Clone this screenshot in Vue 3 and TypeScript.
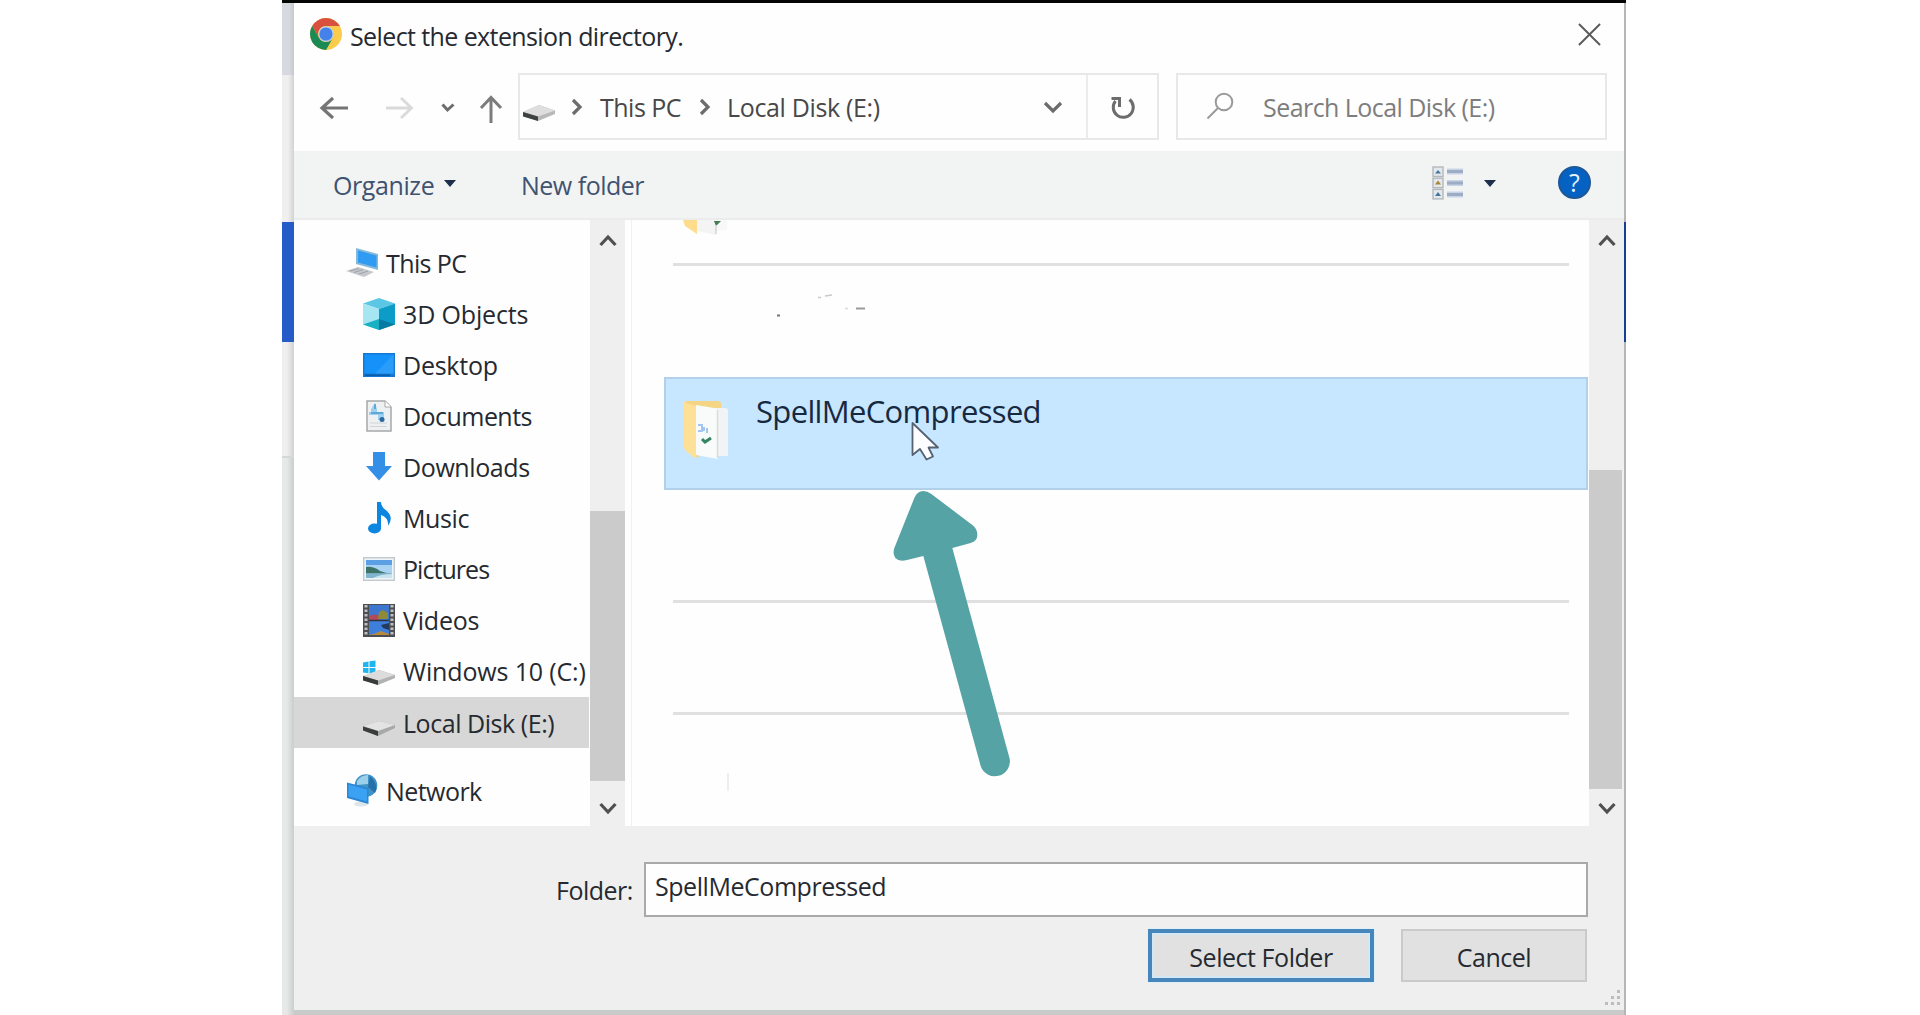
<script setup lang="ts">
type IconName =
  | 'pc' | 'cube' | 'desktop' | 'document' | 'download'
  | 'music' | 'picture' | 'video' | 'windows' | 'disk' | 'network'

interface TreeItem {
  label: string
  icon: IconName
  root?: boolean
  selected?: boolean
  spacing: number
}

const tree: TreeItem[] = [
  { label: 'This PC', icon: 'pc', root: true, spacing: -0.6 },
  { label: '3D Objects', icon: 'cube', spacing: -0.15 },
  { label: 'Desktop', icon: 'desktop', spacing: -0.25 },
  { label: 'Documents', icon: 'document', spacing: -0.55 },
  { label: 'Downloads', icon: 'download', spacing: -0.4 },
  { label: 'Music', icon: 'music', spacing: -0.4 },
  { label: 'Pictures', icon: 'picture', spacing: -0.95 },
  { label: 'Videos', icon: 'video', spacing: -0.2 },
  { label: 'Windows 10 (C:)', icon: 'windows', spacing: -0.15 },
  { label: 'Local Disk (E:)', icon: 'disk', selected: true, spacing: -0.45 },
  { label: 'Network', icon: 'network', root: true, spacing: -0.55 },
]
</script>

<template>
  <div class="page">
    <div class="frame">
      <div class="strip">
        <i class="s1"></i><i class="s2"></i><i class="s3"></i><i class="s4"></i><i class="s5"></i>
      </div>

      <section class="dialog">
        <header class="title">
          <svg class="chrome" viewBox="2 2 44 44">
            <circle cx="24" cy="24" r="22" fill="#fbcb4b" />
            <path d="M4.95 13A22 22 0 0 1 43.05 13H24A11 11 0 0 0 14.47 29.5Z" fill="#d9503f" />
            <path d="M4.95 13L14.47 29.5A11 11 0 0 0 33.53 29.5L24 46A22 22 0 0 1 4.95 13Z" fill="#1b8a54" />
            <circle cx="24" cy="24" r="10.5" fill="#b9cdea" />
            <circle cx="24" cy="24" r="9" fill="#4482ea" />
          </svg>
          <span class="title-text">Select the extension directory.</span>
          <svg class="close" viewBox="0 0 24 24"><path d="M1 1L23 23M23 1L1 23" /></svg>
        </header>

        <div class="nav">
          <svg class="arrows" viewBox="0 0 190 40">
            <path d="M40 20H14M25 10L14 20L25 30" stroke="#757575" stroke-width="3.2" />
            <path d="M78 20H103M93 10L103.500 20L93 30" stroke="#dadada" stroke-width="2.800" />
            <path d="M134.500 16.500L139.500 22L145.500 16.500" stroke="#6c6c6c" stroke-width="3" />
            <path d="M183 35V10M173 20L183 9.500L193 20" stroke="#7c7c7c" stroke-width="3" />
          </svg>
          <div class="address">
            <svg class="drive" viewBox="0 0 32 18">
              <path d="M0 8L16 1L32 6.500V10L15 17L0 12Z" fill="#b9b9b9" />
              <path d="M0 8L16 1L32 6.500L15 12.500Z" fill="#dedede" />
              <path d="M0 8L15 12.500V17L0 12.500Z" fill="#3c4340" />
            </svg>
            <svg class="crumb c1" viewBox="0 0 12 18"><path d="M2 2L9 9L2 16" /></svg>
            <span class="crumb-text pc">This PC</span>
            <svg class="crumb c2" viewBox="0 0 12 18"><path d="M2 2L9 9L2 16" /></svg>
            <span class="crumb-text disk">Local Disk (E:)</span>
            <svg class="drop" viewBox="0 0 20 13"><path d="M2 2L10 10L18 2" /></svg>
            <div class="refresh">
              <svg viewBox="0 0 26 26">
                <path d="M19.500 4.500A10 10 0 1 1 5.500 6" />
                <path d="M1.500 3.500H9.500V12" />
              </svg>
            </div>
          </div>
          <div class="search">
            <svg viewBox="0 0 28 28"><circle cx="18" cy="10" r="8.300" /><path d="M12 16L1.500 26.500" /></svg>
            <span>Search Local Disk (E:)</span>
          </div>
        </div>

        <div class="toolbar">
          <span class="organize">Organize</span>
          <i class="tri t1"></i>
          <span class="newfolder">New folder</span>
          <svg class="view" viewBox="0 0 32 34">
            <g fill="#e3e8ed" stroke="#b3b8bc" stroke-width="1.400">
              <rect x="1" y="1" width="10" height="9.500" />
              <rect x="1" y="12.200" width="10" height="9.500" />
              <rect x="1" y="23.400" width="10" height="9.500" />
            </g>
            <path d="M3 7.500L6 4L9 7.500Z" fill="#44749c" />
            <path d="M3 18.500L6 14.500L9 18.500Z" fill="#a88734" />
            <path d="M3 30L6 26L9 30Z" fill="#44749c" />
            <path d="M15 5.500H31M15 17H31M15 28.500H31" stroke="#c8d4e6" stroke-width="6" />
            <path d="M15 5.500H31M15 17H31M15 28.500H31" stroke="#9cacc5" stroke-width="3" />
          </svg>
          <i class="tri t2"></i>
          <span class="help">?</span>
        </div>

        <div class="body">
          <nav class="tree">
            <div
              v-for="item in tree"
              :key="item.label"
              class="node"
              :class="{ root: item.root, selected: item.selected, network: item.icon === 'network' }"
            >
              <svg class="icon" viewBox="0 0 32 32">
                <g v-if="item.icon === 'pc'">
                  <path d="M10 1L32 7V23L10 17Z" fill="#86b9d9" />
                  <path d="M12 3.500L30.500 8.500V20.500L12 15.500Z" fill="#2f9bf2" />
                  <path d="M0 24L12 20L28 25L18 30Z" fill="#c4c8cc" />
                  <path d="M4 24L13 21.500M8 25.500L17 22.500M13 27L22 24" stroke="#9da3a8" stroke-width="1" />
                </g>
                <g v-else-if="item.icon === 'cube'">
                  <path d="M16 0L32 5.500L16 11L0 5.500Z" fill="#5cc7e4" />
                  <path d="M0 5.500L16 11V32L0 26.500Z" fill="#a6e6f2" />
                  <path d="M32 5.500L16 11V32L32 26.500Z" fill="#0c9cc8" />
                  <path d="M0 26.500L16 21V32Z" fill="#19b0c4" />
                  <path d="M16 32L32 26.500L16 21Z" fill="#087ba3" />
                </g>
                <g v-else-if="item.icon === 'desktop'">
                  <rect x="0" y="4" width="32" height="24" fill="#1379d4" />
                  <rect x="1.500" y="5.500" width="29" height="19" fill="#1492fa" />
                  <path d="M30.500 5.500V24.500H12Z" fill="#2a9dfb" />
                  <path d="M2 26.200H27" stroke="#0a5ca8" stroke-width="1.500" />
                </g>
                <g v-else-if="item.icon === 'document'">
                  <path d="M4 1H22L28 7V31H4Z" fill="#eef0f1" stroke="#a6a8aa" stroke-width="1.500" />
                  <path d="M22 1V7H28" fill="#fff" stroke="#a6a8aa" stroke-width="1" />
                  <path d="M8 9L12 3L14 9V12H21V20H15V15H6V12H8Z" fill="#9fd0f1" />
                  <path d="M12 4V9M8 13H20" stroke="#4a9ad0" fill="none" stroke-width="1.500" />
                  <circle cx="19" cy="19.500" r="2.500" fill="#2c69a0" />
                  <path d="M7 23H24M7 26.500H24" stroke="#d0d4d7" stroke-width="1.200" />
                </g>
                <g v-else-if="item.icon === 'download'">
                  <path d="M10 1H22V15H29L16 29.500L3 15H10Z" fill="#3490e6" />
                </g>
                <g v-else-if="item.icon === 'music'">
                  <ellipse cx="11.500" cy="26.500" rx="6.500" ry="5" fill="#0d86df" />
                  <path d="M14 0H18Q18 5 24 9Q31 16 25 24Q26 16 18 13V27H14Z" fill="#0d86df" />
                </g>
                <g v-else-if="item.icon === 'picture'">
                  <rect x="0.700" y="4.700" width="30.600" height="22.600" fill="#eef3f6" stroke="#c2cad0" stroke-width="1.400" />
                  <rect x="3" y="7" width="26" height="18" fill="#a8d3f4" />
                  <rect x="3" y="7" width="26" height="5" fill="#5b9fe4" />
                  <path d="M3 14Q10 13 17 18Q22 20 29 20.500H3Z" fill="#3c7268" />
                  <path d="M3 20.500H29V25H3Z" fill="#7fb5cf" />
                  <path d="M10 25Q18 21 29 21V25Z" fill="#c9e4ef" />
                </g>
                <g v-else-if="item.icon === 'video'">
                  <rect x="0" y="0" width="32" height="33" fill="#4c4e52" />
                  <rect x="6" y="1" width="20" height="15" fill="#3d76cf" />
                  <rect x="6" y="17" width="20" height="14" fill="#3f7fdc" />
                  <path d="M6 12Q12 9 17 12V16H6Z" fill="#b34a5a" />
                  <path d="M16 8L20 6L25 9V15H15Z" fill="#8f8a35" />
                  <path d="M18 21L26 19V26L20 24Z" fill="#243a5c" />
                  <path d="M6 31L12 29.500L18 27L26 30V31Z" fill="#b98a3a" />
                  <path d="M6 16.500H26" stroke="#2d3342" stroke-width="1.500" />
                  <path d="M3 1V32M29 1V32" stroke="#bfc0c2" stroke-width="3" stroke-dasharray="2.500 2" />
                </g>
                <g v-else-if="item.icon === 'windows'">
                  <path d="M0 7.500L5.500 6.500V12H0ZM6.500 6.300L12.500 5.500V12H6.500ZM0 13H5.500V18.200L0 17.500ZM6.500 13H12.500V19.200L6.500 18.400Z" fill="#1fb6f0" />
                  <path d="M0 21L16 15L32 20V23L15 30L0 25Z" fill="#b2b2b2" />
                  <path d="M0 21L16 15L32 20L15 25.500Z" fill="#dcdcdc" />
                  <path d="M0 21L15 25.500V30L0 25.500Z" fill="#383b3b" />
                </g>
                <g v-else-if="item.icon === 'disk'">
                  <path d="M0 19L16 14L32 18V21L15 29L0 23Z" fill="#a8a8a8" />
                  <path d="M0 19L16 14L32 18L15 24Z" fill="#e3e3e3" />
                  <path d="M0 19.500L15 24V29L0 23.500Z" fill="#3a3d3c" />
                </g>
                <g v-else>
                  <ellipse cx="15" cy="29" rx="7" ry="2.500" fill="#dde5e9" />
                  <circle cx="20" cy="10.500" r="11.300" fill="#3f93c6" />
                  <path d="M11 6Q15 0 22 0L22 9L11 10Z" fill="#9cd0e8" />
                  <path d="M24 1Q33 9 29 18L22 12Z" fill="#2671a8" />
                  <path d="M1 7.500L22.500 13V29L1 23Z" fill="#2b87d3" />
                  <path d="M2.500 9.500L21 14.500V26.500L2.500 21.300Z" fill="#3ba1f3" />
                </g>
              </svg>
              <span :style="{ letterSpacing: item.spacing + 'px' }">{{ item.label }}</span>
            </div>
          </nav>

          <div class="scroll left">
            <svg class="chev" viewBox="0 0 18 13"><path d="M1.500 11L9 3L16.500 11" /></svg>
            <i class="thumb"></i>
            <svg class="chev" viewBox="0 0 18 13"><path d="M1.500 2L9 10L16.500 2" /></svg>
          </div>
          <div class="gutter"></div>

          <main class="files">
            <div class="row partial">
              <svg viewBox="0 0 46 16">
                <path d="M0 0H14V14L2 6Z" fill="#fddc8b" />
                <path d="M14 0H33V15L14 11Z" fill="#f4f4f4" />
                <path d="M33 0H44V10L33 11Z" fill="#f8f8f8" />
                <path d="M31 1L38 1L33 6Z" fill="#447a54" />
                <path d="M33 5V14" stroke="#d5d5d5" stroke-width="1.500" />
              </svg>
            </div>
            <div class="line"></div>
            <div class="row erased">
              <svg viewBox="0 0 110 40">
                <path d="M1 25.500H4" stroke="#6a7b86" stroke-width="2" />
                <path d="M42 7.500H45M49 6L56 5" stroke="#c9c9c9" stroke-width="1.500" />
                <path d="M69 18.500H72" stroke="#dadada" stroke-width="1.500" />
                <path d="M80 18.500H89" stroke="#9b9b9b" stroke-width="2" />
              </svg>
            </div>
            <div class="row chosen">
              <svg class="folder" viewBox="0 0 46 60">
                <path d="M2 1H34Q37 1 37 4V9L14 58L2 50Q0 48 0 45V3Z" fill="#f3d583" />
                <path d="M0 2L12 6V59L2 51Q0 49 0 46Z" fill="#fee096" />
                <path d="M30 8H41Q44 8 44 11V56H33Z" fill="#f2f3f4" />
                <path d="M12 5L30 8Q34 9 34 12V59L12 55Z" fill="#f9fafa" />
                <path d="M33.500 10V58" stroke="#dadcdd" stroke-width="1.500" />
                <path d="M14 25H18V31H14M20 27V31M23 28V33" stroke="#a3c6ee" stroke-width="2" fill="none" />
                <path d="M18 39L21 42L27 38" stroke="#338564" stroke-width="3" fill="none" />
              </svg>
              <span>SpellMeCompressed</span>
            </div>
            <div class="row r4"></div>
            <div class="line"></div>
            <div class="row r5"></div>
            <div class="line"></div>
            <div class="row last"><i></i></div>
          </main>

          <div class="scroll right">
            <svg class="chev" viewBox="0 0 18 13"><path d="M1.500 11L9 3L16.500 11" /></svg>
            <i class="thumb"></i>
            <svg class="chev" viewBox="0 0 18 13"><path d="M1.500 2L9 10L16.500 2" /></svg>
          </div>
        </div>

        <footer class="footer">
          <div class="field">
            <label>Folder:</label>
            <div class="input">SpellMeCompressed</div>
          </div>
          <div class="buttons">
            <button class="primary">Select Folder</button>
            <button class="cancel">Cancel</button>
          </div>
          <svg class="grip" viewBox="0 0 16 16">
            <path d="M12 0h3v3h-3zM6 6h3v3H6zM12 6h3v3h-3zM0 12h3v3H0zM6 12h3v3H6zM12 12h3v3h-3z" fill="#bcbcbc" />
          </svg>
        </footer>
      </section>

      <div class="edge"><i class="e1"></i><i class="e2"></i></div>
    </div>

    <svg class="pointer" viewBox="0 0 28 40">
      <path d="M1.500 2V34L9 28L15.500 38.500L22 35.500L17.500 26.500H27Z" fill="#fdfdff" stroke="#566173" stroke-width="1.800" stroke-linejoin="round" />
    </svg>
    <svg class="callout" viewBox="0 0 660 990">
      <path d="M163 84Q172 63 190 63Q202 63 213 71L338 166Q352 177 352 194Q352 213 332 219L277 234L449 866A45 45 0 0 1 362 888L190 258L138 271Q117 276 106 264Q97 252 103 234Z" fill="#55a3a5" />
    </svg>
  </div>
</template>

<style>
html, body { background: #fff; overflow: hidden; }
</style>

<style scoped>
* { box-sizing: border-box; }
svg { display: block; flex: none; }
.page {
  position: relative; width: 1920px; height: 1015px; background: #fff; overflow: hidden;
  padding-left: 282px; font-family: "Open Sans", "Noto Sans", sans-serif; font-size: 25px; color: #262a30;
}
.page span, .page label { white-space: nowrap; }
.frame { display: flex; width: 1344px; height: 1015px; border-top: 3px solid #050505; background: #c9caca; }
.strip { width: 12px; display: flex; flex-direction: column; }
.strip i { display: block; }
.s1 { height: 72px; background: linear-gradient(90deg, #d6dade 60%, #c5c8cb); }
.s2 { height: 147px; background: linear-gradient(90deg, #efefef 50%, #d2d2d2); }
.s3 { height: 120px; background: #275bc7; }
.s4 { height: 114px; background: linear-gradient(90deg, #efefef 40%, #d0d1d1); }
.s5 { flex: 1; border-top: 2px solid #d6d7d7; background: linear-gradient(90deg, #e7e9e9 40%, #cbcdcd); }
.edge { width: 2px; background: #b4b6b7; }
.edge i { display: block; }
.e1 { height: 219px; }
.e2 { height: 120px; background: #143f93; }
.dialog { width: 1330px; height: 1007px; display: flex; flex-direction: column; background: #fefefe; }

.title { height: 70px; display: flex; align-items: flex-start; padding: 15px 23px 0 16px; }
.chrome { width: 32px; height: 32px; }
.title-text { margin: 0 auto 0 8px; line-height: 36px; letter-spacing: -0.6px; }
.close { width: 23px; height: 23px; margin-top: 5px; }
.close path { stroke: #5a5a5a; stroke-width: 2; fill: none; }

.nav { height: 78px; display: flex; align-items: flex-start; color: #484848; }
.arrows { width: 190px; height: 40px; margin: 15px 34px 0 0; overflow: visible; fill: none; transform: translateX(14px); }
.address { width: 641px; height: 67px; border: 2px solid #e8e8e8; display: flex; align-items: center; }
.drive { width: 32px; height: 18px; margin: 12px 0 0 3px; }
.crumb { width: 12px; height: 18px; }
.crumb path, .drop path { fill: none; stroke: #6c6c6c; stroke-width: 3.2; }
.c1 { margin-left: 16px; }
.pc { width: 82px; margin-left: 17px; letter-spacing: -0.5px; }
.c2 { margin-left: 17px; }
.disk { width: 153px; margin-left: 16px; letter-spacing: -0.35px; }
.drop { width: 20px; height: 13px; margin: 2px 0 0 auto; }
.refresh { width: 71px; height: 63px; margin-left: 23px; border-left: 2px solid #ececec; display: flex; align-items: center; justify-content: center; }
.refresh svg { width: 26px; height: 26px; margin-top: 2px; fill: none; stroke: #6c6c6c; stroke-width: 3; }
.search { width: 431px; height: 67px; margin-left: 17px; border: 2px solid #e8e8e8; display: flex; align-items: center; color: #7d7d7d; }
.search svg { width: 28px; height: 28px; margin-left: 28px; margin-bottom: 1px; fill: none; stroke: #9a9a9a; stroke-width: 2; }
.search span { margin: 1px 0 0 29px; letter-spacing: -0.55px; }

.toolbar { height: 69px; background: #f2f4f4; border-bottom: 2px solid #ececec; display: flex; align-items: center; color: #405370; }
.organize { width: 103px; margin-left: 39px; letter-spacing: -0.4px; }
.tri { border: 6px solid transparent; border-top: 7px solid #1e2f4c; border-bottom: 0; }
.t1 { margin: 0 0 3px 8px; }
.newfolder { width: 124px; margin-left: 65px; letter-spacing: -0.5px; }
.view { width: 32px; height: 34px; margin-left: auto; margin-bottom: 4px; }
.t2 { margin: 0 0 3px 20px; }
.help {
  width: 33px; height: 33px; margin: 0 33px 4px 62px; border-radius: 50%; background: #0662c2;
  border: 2px solid #1d5799; color: #e4f2ff; font-size: 25px; line-height: 29px; text-align: center;
}

.body { height: 606px; display: flex; background: #fefefe; }
.tree { width: 296px; padding-top: 17px; overflow: hidden; }
.node { height: 51.120px; display: flex; align-items: center; padding-left: 69px; width: 295px; }
.node.root { padding-left: 52px; }
.node.selected { background: #d7d7d7; }
.node.network { margin-top: 17px; }
.icon { width: 32px; height: 32px; overflow: visible; }
.node span { margin-left: 8px; }
.scroll { background: #efefef; display: flex; flex-direction: column; align-items: center; }
.scroll.left { width: 35px; }
.scroll.right { width: 35px; }
.chev { width: 18px; height: 13px; margin-top: 14px; }
.chev path { fill: none; stroke: #505050; stroke-width: 3.2; }
.thumb { display: block; width: 100%; background: #cbcbcb; }
.left .thumb { height: 270px; margin-top: 264px; }
.right .thumb { width: 33px; height: 319px; margin-top: 223px; align-self: flex-start; }
.left .chev:last-child { margin-top: 21px; }
.right .chev:last-child { margin-top: 13px; }
.gutter { width: 7px; border-right: 1px solid #f1f1f1; }

.files { width: 957px; }
.line { height: 3px; margin: 0 20px 0 41px; background: #e0e0e0; }
.partial { height: 43px; padding-left: 51px; }
.partial svg { width: 46px; height: 16px; }
.erased { height: 111px; padding: 24px 0 0 144px; }
.erased svg { width: 110px; height: 40px; }
.chosen {
  height: 113px; margin: 0 1px 0 32px; background: #c7e6ff; border: 2px solid #b3d0ea;
  display: flex; align-items: flex-start; padding: 21px 0 0 18px; color: #17293f; font-size: 31px;
}
.folder { width: 46px; height: 60px; }
.chosen span { margin: -10px 0 0 26px; line-height: 42px; letter-spacing: -0.66px; }
.r4 { height: 110px; }
.r5 { height: 109px; }
.last { padding: 58px 0 0 95px; }
.last i { display: block; width: 2px; height: 18px; background: #eeeeee; }

.footer { position: relative; height: 184px; background: #efefef; padding: 36px 36px 0 0; }
.field { height: 55px; display: flex; align-items: flex-start; justify-content: flex-end; }
.field label { width: 79px; margin: 11px 9px 0 0; line-height: 34px; letter-spacing: -0.5px; }
.input { width: 944px; height: 55px; border: 2px solid #a9a9a9; background: #fefefe; padding-left: 9px; line-height: 45px; letter-spacing: -0.45px; }
.buttons { display: flex; justify-content: flex-end; gap: 27px; margin: 12px 1px 0 0; }
button { height: 53px; padding: 2px 0 0; font: inherit; color: #262a30; background: #e1e1e1; white-space: nowrap; border-radius: 0; }
.primary { width: 226px; border: 4px solid #4686bb; box-shadow: inset 0 0 0 2px #d3e7f5, 0 0 0 1px #def1fa; letter-spacing: -0.45px; }
.cancel { width: 186px; border: 2px solid #cacaca; letter-spacing: -0.5px; }
.grip { position: absolute; right: 3px; bottom: 4px; width: 16px; height: 16px; }

.pointer { position: absolute; left: 911px; top: 421px; width: 28px; height: 40px; }
.callout { position: absolute; left: 860px; top: 470px; width: 220px; height: 330px; }
</style>
